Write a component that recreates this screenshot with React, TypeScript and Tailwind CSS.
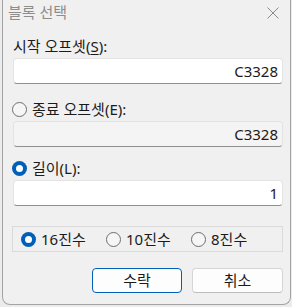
import React from 'react';

function Radio({ checked }: { checked?: boolean }) {
  return checked ? (
    <span className="w-[15px] h-[15px] shrink-0 rounded-full bg-[#005fb8] flex items-center justify-center">
      <span className="w-[7px] h-[7px] rounded-full bg-white" />
    </span>
  ) : (
    <span className="w-[15px] h-[15px] shrink-0 rounded-full border border-[#6e6e6e] bg-[#f6f6f6]" />
  );
}

function TextBox({ value, disabled }: { value: string; disabled?: boolean }) {
  return (
    <div
      className={`mt-[2px] h-[26px] w-[270px] rounded-[4px] border border-[#e3e3e3] border-b-[#8f8f8f] flex items-center justify-end pr-[4px] text-[15px] text-[#1b1b1b] ${
        disabled ? 'bg-[#f4f4f4]' : 'bg-white'
      }`}
    >
      {value}
    </div>
  );
}

export default function App() {
  return (
    <div className="w-[292px] h-[307px] bg-[#ececec] overflow-hidden font-['Noto_Sans','Noto_Sans_CJK_KR',sans-serif]">
      <div className="ml-[2px] w-[289px] h-[305px] bg-[#f0f0f0] border-l border-r border-b border-[#a3a3a3] rounded-b-[8px] flex flex-col">
        {/* title bar */}
        <div className="h-[24px] flex items-center justify-between pl-[5px] pr-[11px]">
          <span className="text-[15px] text-[#8c8c8c] leading-none">블록 선택</span>
          <svg width="12" height="12" viewBox="0 0 12 12" className="mt-[1px]">
            <path d="M0.5 0.5 L11.5 11.5 M11.5 0.5 L0.5 11.5" stroke="#8a8a8a" strokeWidth="1" fill="none" />
          </svg>
        </div>

        <div className="pl-[10px] flex flex-col text-[15px] text-[#1b1b1b]">
          <div className="mt-[12px] h-[20px] flex items-center">
            시작 오프셋(<span className="underline underline-offset-2">S</span>):
          </div>
          <TextBox value="C3328" />

          <div className="mt-[15px] h-[20px] flex items-center gap-[5px] -ml-[1px]">
            <Radio />
            <span>종료 오프셋(E):</span>
          </div>
          <TextBox value="C3328" disabled />

          <div className="mt-[11px] h-[20px] flex items-center gap-[5px] -ml-[1px]">
            <Radio checked />
            <span>길이(L):</span>
          </div>
          <TextBox value="1" />

          <div className="mt-[20px] -ml-[1px] w-[271px] h-[26px] border border-[#dadada] flex items-center pl-[8px]">
            <div className="flex items-center gap-[5px] w-[85px]">
              <Radio checked />
              <span>16진수</span>
            </div>
            <div className="flex items-center gap-[5px] w-[85px]">
              <Radio />
              <span>10진수</span>
            </div>
            <div className="flex items-center gap-[5px]">
              <Radio />
              <span>8진수</span>
            </div>
          </div>

          <div className="mt-[16px] flex justify-end gap-[10px] w-[270px]">
            <button className="w-[90px] h-[25px] rounded-[4px] bg-[#fdfdfd] border border-[#005fb8] text-[15px] text-[#1b1b1b] flex items-center justify-center">
              수락
            </button>
            <button className="w-[91px] h-[25px] rounded-[4px] bg-[#fdfdfd] border border-[#d6d6d6] border-b-[#bdbdbd] text-[15px] text-[#1b1b1b] flex items-center justify-center">
              취소
            </button>
          </div>
        </div>
      </div>
    </div>
  );
}
